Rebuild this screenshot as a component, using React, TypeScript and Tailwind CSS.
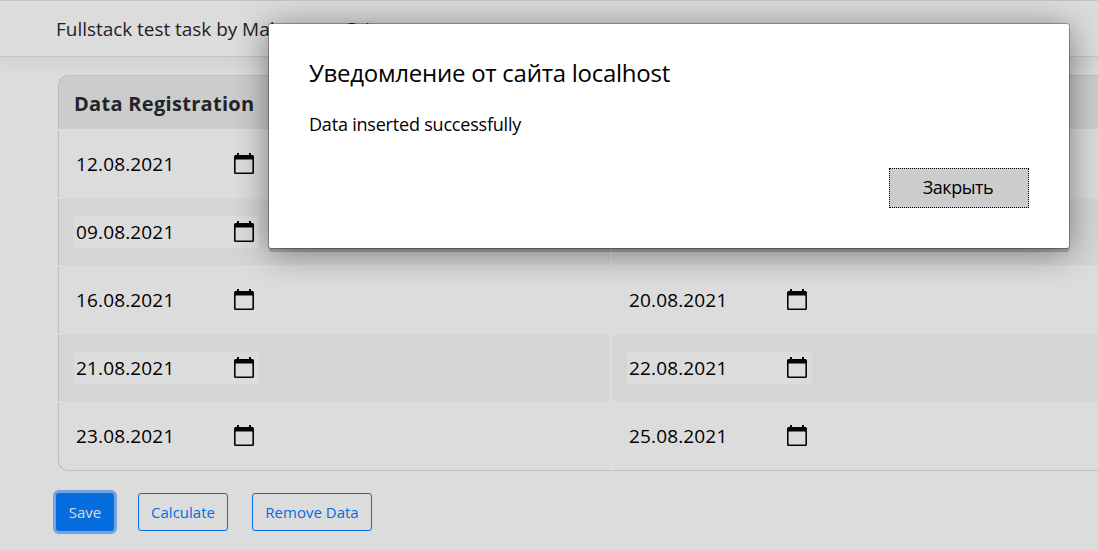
import React from "react";

type Row = { from: string; to: string };

const rows: Row[] = [
  { from: "12.08.2021", to: "15.08.2021" },
  { from: "09.08.2021", to: "18.08.2021" },
  { from: "16.08.2021", to: "20.08.2021" },
  { from: "21.08.2021", to: "22.08.2021" },
  { from: "23.08.2021", to: "25.08.2021" },
];

function CalendarIcon() {
  return (
    <svg width="20" height="22" viewBox="0 0 20 22" className="block shrink-0">
      <path
        fillRule="evenodd"
        fill="#050505"
        d="M3 0h2v2h10V0h2v2h1.5A1.5 1.5 0 0 1 20 3.500v16a1.500 1.500 0 0 1-1.500 1.500h-17A1.500 1.500 0 0 1 0 19.500v-16A1.500 1.500 0 0 1 1.500 2H3zM1.600 6.500v12.900h16.800V6.500z"
      />
    </svg>
  );
}

function DateField({ value }: { value: string }) {
  return (
    <div className="flex h-8 w-[185px] items-center justify-between bg-[#dcdcdc] pl-[2px] pr-[5px]">
      <span className="text-[19px] leading-8 tracking-[0.15px] text-black">{value}</span>
      <CalendarIcon />
    </div>
  );
}

function DataTable() {
  return (
    <div className="ml-[58px] mt-[18px] flex w-[1106px] flex-col gap-[2px]">
      <div className="flex h-[54px] items-center rounded-tl-[10px] border-l border-t border-[#bdbdbd] bg-[#cccccc] pl-[15px] pt-[2px] text-[20px] font-bold text-[#212529]">
        <span className="tracking-[0.3px]">Data Registration</span>
      </div>
      {rows.map((row, i) => {
        const tint = i % 2 === 1 ? "bg-[#d5d5d5]" : "bg-[#dcdcdc]";
        const last = i === rows.length - 1;
        const edge = last ? "h-[68px] border-b rounded-bl-[10px] pb-[1px]" : "h-[66px]";
        const bottom = last ? "h-[68px] border-b pb-[1px]" : "h-[66px]";
        return (
          <div key={row.from} className="flex gap-[2px]">
            <div className={`flex w-[552px] items-center border-l border-[#bdbdbd] pl-[15px] ${edge} ${tint}`}>
              <DateField value={row.from} />
            </div>
            <div className={`flex w-[552px] items-center border-[#bdbdbd] pl-[15px] ${bottom} ${tint}`}>
              <DateField value={row.to} />
            </div>
          </div>
        );
      })}
    </div>
  );
}

function Alert() {
  return (
    <div
      role="alertdialog"
      className="absolute left-[269px] top-[24px] flex h-[224px] w-[800px] flex-col rounded-[2px] bg-white px-10 pt-[33px] text-black shadow-[0_0_0_1px_rgba(0,0,0,0.28),0_4px_1px_rgba(0,0,0,0.2),0_4px_34px_rgba(0,0,0,0.46)]"
    >
      <h2 className="whitespace-nowrap text-[24px] leading-8">
        <span className="tracking-[-0.26px]">Уведомление от сайта localhost</span>
      </h2>
      <p className="mt-[23px] whitespace-nowrap text-[18px] leading-6">
        <span className="tracking-[-0.2px]">Data inserted successfully</span>
      </p>
      <button className="mt-[32px] h-10 w-[140px] self-end border border-dotted border-black bg-[#cccccc] pb-[2px] pr-[2px] text-[18px]">
        <span className="tracking-[-0.45px]">Закрыть</span>
      </button>
    </div>
  );
}

export default function App() {
  return (
    <div className="relative h-[550px] w-full overflow-hidden bg-[#dcdcdc] font-['Open_Sans','Noto_Sans',sans-serif]">
      <header className="flex h-[57px] items-center border-y border-[#c4c4c4] bg-[#dcdcdc] pl-[56px] pt-[1px] shadow-[0_4px_18px_rgba(0,0,0,0.07)]">
        <span className="whitespace-nowrap text-[19px] tracking-[-0.04px] text-[#1f1f1f]">
          Fullstack test task by Maksumov Grigor
        </span>
      </header>
      <DataTable />
      <div className="ml-[56px] mt-[22px] flex gap-6 text-[15px]">
        <button className="h-[38px] w-[58px] rounded-[3px] bg-[#056ddd] text-[#dcdcdc] shadow-[0_0_0_3px_#74a4dc]">
          <span>Save</span>
        </button>
        <button className="h-[38px] w-[90px] rounded-[3px] border border-[#056ddd] text-[#056ddd]">
          <span>Calculate</span>
        </button>
        <button className="h-[38px] w-[120px] whitespace-nowrap rounded-[3px] border border-[#056ddd] text-[#056ddd]">
          <span>Remove Data</span>
        </button>
      </div>
      <Alert />
    </div>
  );
}
